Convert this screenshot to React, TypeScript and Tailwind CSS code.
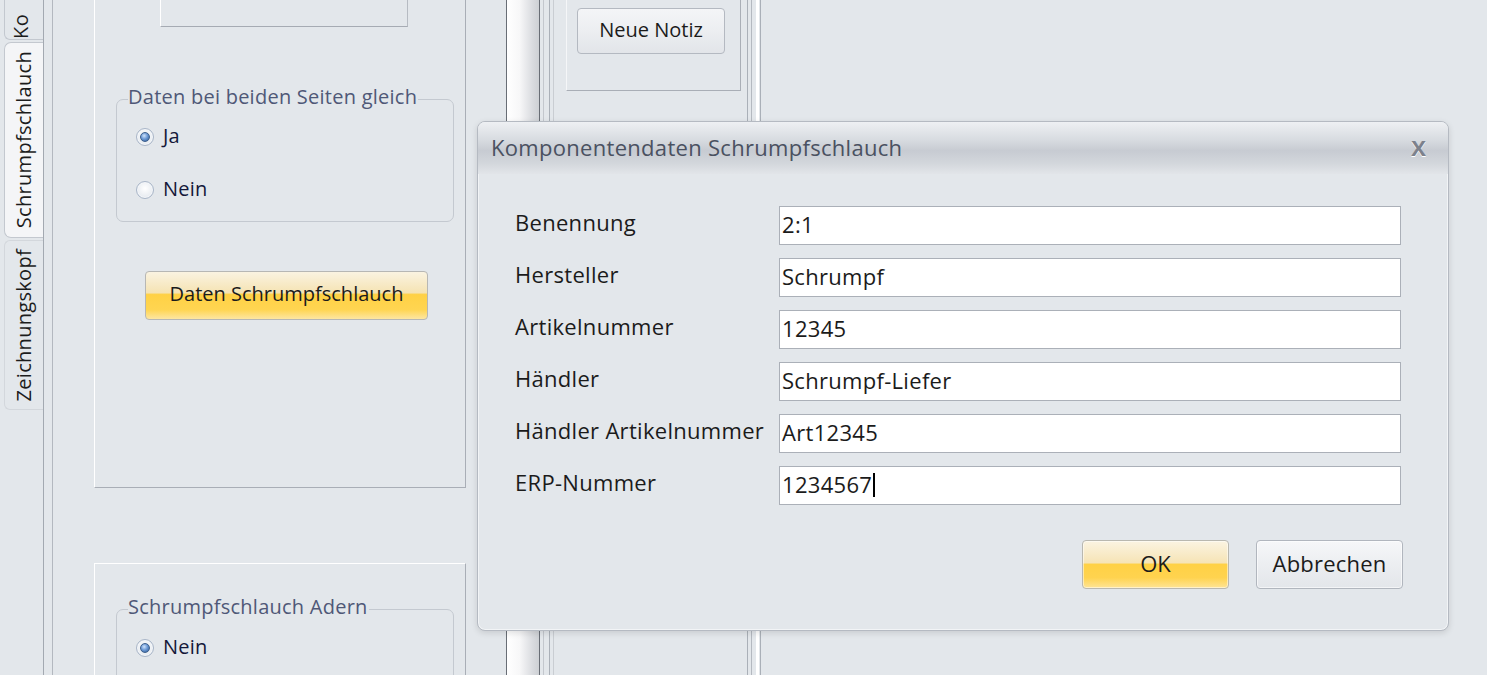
import React from 'react';

const FONT = "font-['Open_Sans','Noto_Sans',sans-serif]";

// Radio knob in Windows/DevExpress style
const Radio = ({ checked }: { checked?: boolean }) => (
  <span className="flex h-[18px] w-[18px] items-center justify-center rounded-full border border-[#a9b6c8] bg-[radial-gradient(circle_at_50%_40%,#ffffff,#dde3ea)] shadow-[inset_0_0_0_1px_#f4f6f9]">
    {checked && (
      <span className="h-[10px] w-[10px] rounded-full border border-[#3d5f8c] bg-[radial-gradient(circle_at_40%_35%,#cfe3fb_0%,#6d9ad6_45%,#2b578f_100%)]" />
    )}
  </span>
);

const RadioRow = ({ label, checked }: { label: string; checked?: boolean }) => (
  <div className="flex items-center gap-[9px] pl-[19px]">
    <Radio checked={checked} />
    <span className="pb-[2px] text-[20px] leading-none tracking-[0.2px] text-[#14183a]">{label}</span>
  </div>
);

const GroupBox = ({ title, className, children }: { title: string; className: string; children: React.ReactNode }) => (
  <div className={`relative ml-[21px] w-[338px] rounded-[7px] border border-[#c4c9d0] ${className}`}>
    <span className="absolute -top-[16px] left-[11px] bg-[#e3e7eb] pr-[1px] text-[20px] leading-[26px] tracking-[0.25px] text-[#4f5877]">
      {title}
    </span>
    {children}
  </div>
);

const VerticalTab = ({ label, className }: { label: string; className: string }) => (
  <div className={`flex items-center justify-center ${className}`}>
    <span className="rotate-180 text-[20px] leading-none tracking-[0.3px] text-[#1c1c1c] [writing-mode:vertical-rl]">{label}</span>
  </div>
);

const TabStrip = () => (
  <div className="flex w-[43px] shrink-0 flex-col">
    <div className="ml-[4px] flex h-[40px] items-end justify-center overflow-hidden rounded-bl-[6px] border-b border-l border-[#c3c8cf]">
      <span className="rotate-180 pl-[6px] text-[20px] leading-none tracking-[0.3px] text-[#1c1c1c] [writing-mode:vertical-rl]">Ko</span>
    </div>
    <VerticalTab
      label="Schrumpfschlauch"
      className="ml-[4px] mt-[2px] h-[196px] rounded-l-[7px] border border-r-0 border-[#c3c8cf] bg-[#f4f5f7]"
    />
    <VerticalTab
      label="Zeichnungskopf"
      className="ml-[4px] mt-[2px] h-[170px] rounded-l-[6px] border border-r-0 border-[#d3d7dc]"
    />
    <div className="flex-1" />
  </div>
);

const Field = ({ label, value, caret }: { label: string; value: string; caret?: boolean }) => (
  <>
    <span className="pb-[7px] text-[22px] leading-none tracking-[0.3px] text-[#1b1b1b]">{label}</span>
    <div className="flex h-[39px] items-center border border-[#abb0b8] bg-white pb-[4px] pl-[2px] text-[22px] leading-none tracking-[0.3px] text-[#1b1b1b]">
      {value}
      {caret && <span className="ml-[1px] mt-[3px] h-[24px] w-[2px] bg-black" />}
    </div>
  </>
);

const fields = [
  { label: 'Benennung', value: '2:1' },
  { label: 'Hersteller', value: 'Schrumpf' },
  { label: 'Artikelnummer', value: '12345' },
  { label: 'Händler', value: 'Schrumpf-Liefer' },
  { label: 'Händler Artikelnummer', value: 'Art12345' },
  { label: 'ERP-Nummer', value: '1234567', caret: true },
];

const Dialog = () => (
  <div className="absolute left-[477px] top-[121px] flex h-[510px] w-[972px] flex-col overflow-hidden rounded-[8px] border border-[#b5bac2] bg-[#e3e7eb] shadow-[0_2px_6px_rgba(0,0,0,0.12),inset_0_0_0_1px_#f2f4f6]">
    {/* Title bar */}
    <div className="flex h-[52px] items-center justify-between bg-[linear-gradient(to_bottom,#eef0f3_0%,#d7dbe0_35%,#c7cbd2_55%,#d3d7dc_80%,#e2e5e9_100%)] pb-[2px] pl-[13px] pr-[22px]">
      <span className="text-[22px] leading-none tracking-[0.3px] text-[#4a5161]">Komponentendaten Schrumpfschlauch</span>
      <span className="text-[22px] font-bold leading-none text-[#7c818c] [text-shadow:0_1px_0_#ffffff]">X</span>
    </div>

    {/* Form */}
    <div className="grid grid-cols-[264px_622px] items-center gap-y-[13px] pl-[37px] pt-[32px]">
      {fields.map((f) => (
        <Field key={f.label} {...f} />
      ))}
    </div>

    <div className="flex justify-end gap-[27px] pr-[45px] pt-[35px]">
      <button className="h-[49px] w-[147px] rounded-[4px] border border-[#b9b8b0] bg-[linear-gradient(to_bottom,#fbf4e2_0%,#f6e4b6_46%,#ffd145_50%,#ffd34f_78%,#fee496_100%)] pb-[3px] text-[22px] leading-none text-[#1b1b1b] shadow-[inset_0_0_0_1px_rgba(255,255,255,0.5)]">
        OK
      </button>
      <button className="h-[49px] w-[147px] rounded-[4px] border border-[#b1b6be] bg-[linear-gradient(to_bottom,#f6f7f9_0%,#eceef1_50%,#e3e6ea_100%)] pb-[3px] text-[22px] leading-none tracking-[0.2px] text-[#1b1b1b] shadow-[inset_0_0_0_1px_rgba(255,255,255,0.6)]">
        Abbrechen
      </button>
    </div>
  </div>
);

export default function App() {
  return (
    <div className={`relative h-[675px] w-[1487px] overflow-hidden bg-[#e3e7eb] ${FONT}`}>
      <div className="flex h-full">
        <TabStrip />

        {/* tab page frame */}
        <div className="w-[10px] shrink-0 border-l border-r border-l-[#a3a9b1] border-r-[#b3b8bf]" />
        <div className="w-[41px] shrink-0" />

        {/* left property panels */}
        <div className="flex w-[372px] shrink-0 flex-col">
          <div className="flex h-[488px] shrink-0 flex-col border-b border-l border-r border-b-[#a9aeb6] border-l-white border-r-[#a9aeb6]">
            <div className="ml-[65px] h-[27px] w-[248px] border-b border-l border-r border-b-[#a6abb3] border-l-white border-r-[#b6bbc2]" />
            <GroupBox title="Daten bei beiden Seiten gleich" className="mt-[72px] h-[123px] pt-[26px]">
              <div className="flex flex-col gap-[31px]">
                <RadioRow label="Ja" checked />
                <RadioRow label="Nein" />
              </div>
            </GroupBox>
            <button className="ml-[50px] mt-[49px] h-[49px] w-[283px] rounded-[4px] border border-[#b7b7b4] bg-[linear-gradient(to_bottom,#faf3e1_0%,#f5e3b3_44%,#ffd145_48%,#ffd551_80%,#fde6a2_100%)] pb-[3px] text-[20px] leading-none text-[#1b1b1b]">
              Daten Schrumpfschlauch
            </button>
          </div>
          <div className="mt-[75px] flex-1 border-l border-r border-t border-l-white border-r-[#a9aeb6] border-t-white">
            <GroupBox title="Schrumpfschlauch Adern" className="mt-[45px] h-[100px] pt-[27px]">
              <RadioRow label="Nein" checked />
            </GroupBox>
          </div>
        </div>

        <div className="w-[40px] shrink-0" />

        {/* splitter */}
        <div className="w-[1px] shrink-0 bg-[#686d75]" />
        <div className="w-[32px] shrink-0 bg-[linear-gradient(to_right,#ffffff_0%,#f7f7f8_40%,#d9dbdf_80%,#cdd0d4_100%)]" />
        <div className="w-[1px] shrink-0 bg-[#686d75]" />
        <div className="w-[3px] shrink-0" />
        <div className="w-[1px] shrink-0 bg-[#c3c7cd]" />
        <div className="w-[5px] shrink-0" />
        <div className="w-[1px] shrink-0 bg-[#aab0b8]" />
        <div className="w-[3px] shrink-0" />
        <div className="w-[1px] shrink-0 bg-[#c9cdd2]" />
        <div className="w-[12px] shrink-0" />

        {/* notes panel */}
        <div className="flex w-[175px] shrink-0 flex-col">
          <div className="h-[91px] border-b border-l border-r border-b-[#a9aeb6] border-l-[#f5f6f8] border-r-[#a9aeb6] pl-[10px] pt-[8px]">
            <button className="h-[46px] w-[148px] rounded-[4px] border border-[#b4b9c1] bg-[linear-gradient(to_bottom,#f4f5f7_0%,#eceef1_50%,#e2e5e9_100%)] pb-[2px] text-[20px] leading-none text-[#1b1b1b]">
              Neue Notiz
            </button>
          </div>
        </div>

        <div className="w-[6px] shrink-0" />
        <div className="w-[1px] shrink-0 bg-[#aab0b8]" />
        <div className="w-[3px] shrink-0" />
        <div className="w-[1px] shrink-0 bg-[#b4b9c0]" />
        <div className="w-[4px] shrink-0" />
        <div className="w-[3px] shrink-0 bg-white" />
        <div className="w-[1px] shrink-0" />
        <div className="w-[1px] shrink-0 bg-[#aab0b8]" />
        <div className="flex-1" />
      </div>

      <Dialog />
    </div>
  );
}
